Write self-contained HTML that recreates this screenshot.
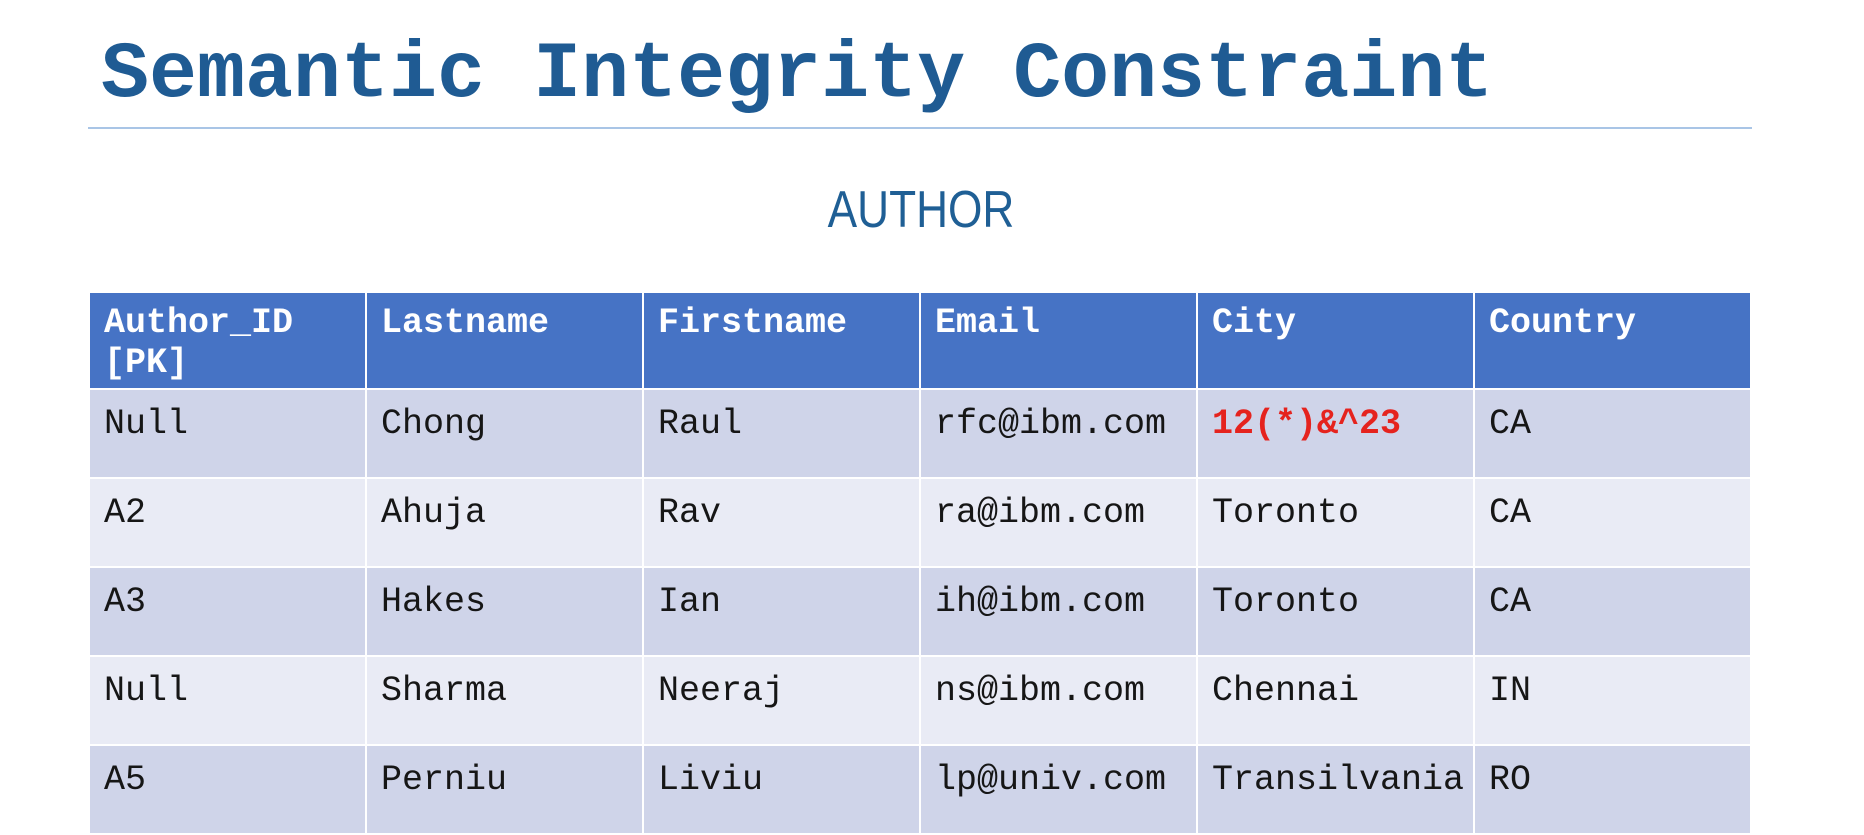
<!DOCTYPE html>
<html><head><meta charset="utf-8"><style>
html,body{margin:0;padding:0;background:#fff;width:1864px;height:835px;overflow:hidden;position:relative;font-family:"Liberation Mono",monospace;}
.title{position:absolute;left:101px;top:30px;font-size:80px;font-weight:bold;color:#1f5b93;letter-spacing:0px;white-space:nowrap;}
.rule{position:absolute;left:88px;top:127px;width:1664px;height:2px;background:#a9c5e6;}
.auth{position:absolute;left:0;width:1842px;text-align:center;top:180px;font-family:"Liberation Sans",sans-serif;font-size:52px;color:#1f5f95;transform:scaleX(0.85);}
table{position:absolute;left:88px;top:291px;border-collapse:collapse;table-layout:fixed;width:1664px;}
td{width:277px;padding:0 0 0 14px;vertical-align:top;font-size:35px;color:#161616;border:2px solid #fff;height:89px;box-sizing:border-box;padding-top:14px;line-height:40px;white-space:nowrap;overflow:hidden;}
tr.h td{background:#4673c5;color:#fff;height:97px;padding-top:10px;font-weight:bold;}
tr.o td{background:#cfd4e9;}
tr.e td{background:#e9ebf5;}
.red{color:#e5231e;font-weight:bold;}
</style></head><body>
<div class="title">Semantic Integrity Constraint</div>
<div class="rule"></div>
<div class="auth">AUTHOR</div>
<table>
<tr class="h"><td>Author_ID<br>[PK]</td><td>Lastname</td><td>Firstname</td><td>Email</td><td>City</td><td>Country</td></tr>
<tr class="o"><td>Null</td><td>Chong</td><td>Raul</td><td>rfc@ibm.com</td><td class="red">12(*)&amp;^23</td><td>CA</td></tr>
<tr class="e"><td>A2</td><td>Ahuja</td><td>Rav</td><td>ra@ibm.com</td><td>Toronto</td><td>CA</td></tr>
<tr class="o"><td>A3</td><td>Hakes</td><td>Ian</td><td>ih@ibm.com</td><td>Toronto</td><td>CA</td></tr>
<tr class="e"><td>Null</td><td>Sharma</td><td>Neeraj</td><td>ns@ibm.com</td><td>Chennai</td><td>IN</td></tr>
<tr class="o"><td>A5</td><td>Perniu</td><td>Liviu</td><td>lp@univ.com</td><td>Transilvania</td><td>RO</td></tr>
</table>
</body></html>
